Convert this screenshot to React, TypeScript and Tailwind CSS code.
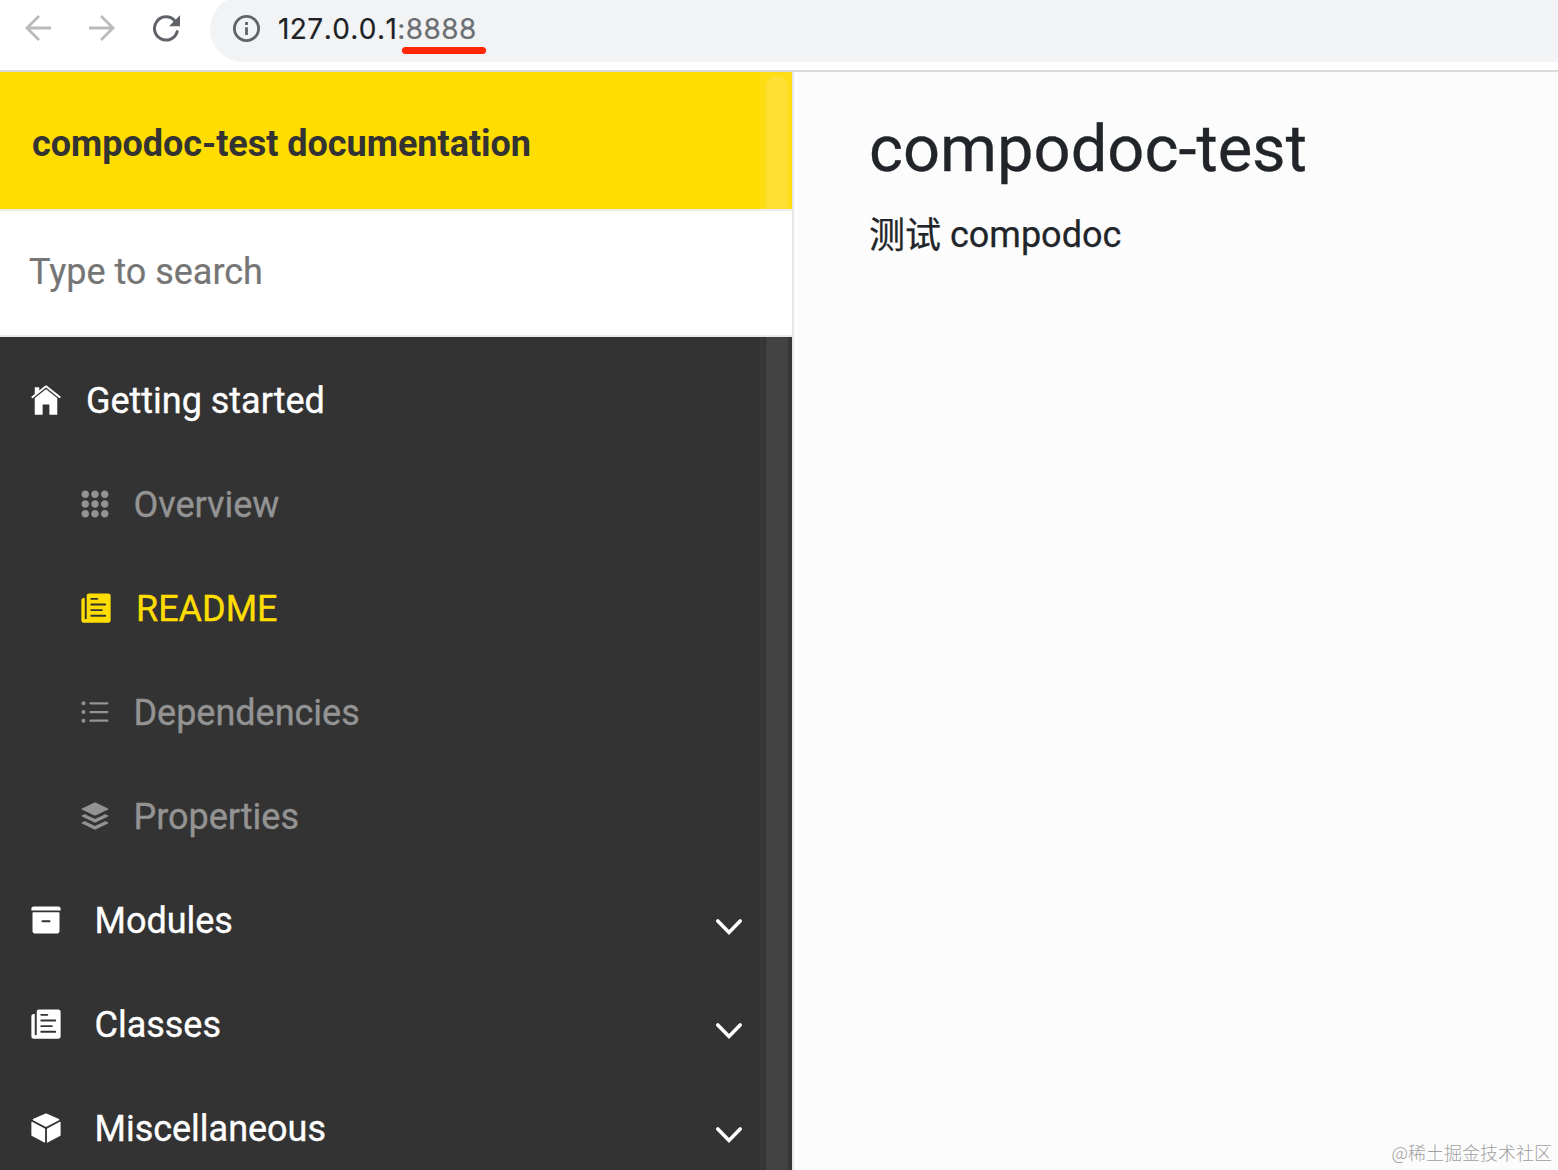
import type { ReactNode } from "react";
import {
  IoIosArchive,
  IoIosCube,
  IoIosHome,
  IoIosKeypad,
  IoIosList,
  IoIosPaper,
  IoLogoBuffer,
} from "react-icons/io";

function BrowserBar() {
  return (
    <header className="flex h-[72px] shrink-0 items-start border-b-2 border-[#dadada] bg-white">
      <div className="flex h-[55px] w-[210px] shrink-0 items-center pl-[24px]">
        <svg width="28" height="28" viewBox="0 0 28 28" fill="none" stroke="#bababa" strokeWidth="2.8">
          <path d="M27 14H3M15 2L3 14l12 12" />
        </svg>
        <svg className="ml-9" width="28" height="28" viewBox="0 0 28 28" fill="none" stroke="#bababa" strokeWidth="2.8">
          <path d="M1 14h24M13 2L25 14 13 26" />
        </svg>
        <svg className="ml-9" width="30" height="30" viewBox="0 0 30 30" fill="none">
          <path d="M25.2 18.6A11.6 11.6 0 1 1 22.5 7.500" stroke="#5f6368" strokeWidth="3" strokeLinecap="round" />
          <path d="M28 2.200v11h-11z" fill="#5f6368" />
        </svg>
      </div>
      <div className="-mt-1 flex h-[66px] flex-1 items-center rounded-l-full bg-[#f1f3f4] pl-[23px]">
        <svg className="-mt-0.5" width="27" height="27" viewBox="0 0 27 27">
          <circle cx="13.5" cy="13.5" r="12.1" fill="none" stroke="#5f6368" strokeWidth="2.8" />
          <path d="M12.100 12.300h2.800v7.800h-2.800zM12.100 7h2.800v2.900h-2.800z" fill="#5f6368" />
        </svg>
        <div className="-mt-px ml-[18px] flex font-['Inter',sans-serif] text-[28px] leading-[34px] tracking-[0.45px] text-[#202124] [font-feature-settings:'calt'_0] [font-kerning:none] [-webkit-text-stroke:0.2px_currentColor]">
          <span>127.0.0.1</span>
          <span className="relative text-[#6b6e72]">
            :8888
            <span className="absolute -right-[9px] bottom-[-8px] h-[7px] w-[84px] rounded-full bg-[#ff2600]" />
          </span>
        </div>
      </div>
    </header>
  );
}

function Chevron() {
  return (
    <svg width="28" height="18" viewBox="0 0 28 18" fill="none" stroke="#fff" strokeWidth="3.6" strokeLinecap="round">
      <path d="M2.800 3L14 14.500 25.200 3" />
    </svg>
  );
}

function ChildRow({ icon, label, active }: { icon: ReactNode; label: string; active?: boolean }) {
  return (
    <li className={active ? "flex h-[104px] items-center pl-[78px] text-[#ffdd00]" : "flex h-[104px] items-center pl-[77px] text-[#939393]"}>
      <span className={active ? "-mt-px w-[58px]" : "-mt-px w-[56.5px]"}>{icon}</span>
      <span className="mt-0.5">{label}</span>
    </li>
  );
}

function SectionRow({ icon, label }: { icon: ReactNode; label: string }) {
  return (
    <li className="flex h-[104px] items-center pr-[17px] pl-[28px] text-white">
      <span className="-mt-px w-[66.5px]">{icon}</span>
      <span className="mt-0.5 flex-1">{label}</span>
      <span className="mt-[14px]">
        <Chevron />
      </span>
    </li>
  );
}

function Sidebar() {
  return (
    <aside className="flex w-[794px] shrink-0 flex-col overflow-hidden border-r-2 border-[#e6e6e6] bg-[#333333] tracking-[-0.02px] [-webkit-text-stroke:0.35px_currentColor]">
      <div className="flex h-[137px] shrink-0 justify-between bg-[#ffdd00] pl-8 font-bold text-[#333333] [-webkit-text-stroke:0]">
        <span className="mt-[45px]">compodoc-test documentation</span>
        <div className="w-8 bg-[#ffdd15] pt-1 pl-[6px]">
          <div className="h-[133px] w-[22px] rounded-t-full bg-[#ffdf33]" />
        </div>
      </div>
      <div className="flex h-32 shrink-0 items-center border-y-2 border-[#ebebeb] bg-white pb-0.5 pl-[29px] text-[#757575] [-webkit-text-stroke:0.2px_currentColor]">
        Type to search
      </div>
      <div className="flex flex-1">
        <ul className="w-[760px] shrink-0 pt-[11px]">
          <li className="flex h-[104px] items-center pl-[28px] text-white">
            <span className="-mt-px w-[58px]">
              <IoIosHome size={36} />
            </span>
            <span className="mt-0.5">Getting started</span>
          </li>
          <ChildRow icon={<IoIosKeypad size={36} />} label="Overview" />
          <ChildRow icon={<IoIosPaper size={36} />} label="README" active />
          <ChildRow icon={<IoIosList size={36} />} label="Dependencies" />
          <ChildRow icon={<IoLogoBuffer size={36} />} label="Properties" />
          <SectionRow icon={<IoIosArchive size={36} />} label="Modules" />
          <SectionRow icon={<IoIosPaper size={36} />} label="Classes" />
          <SectionRow icon={<IoIosCube size={36} />} label="Miscellaneous" />
        </ul>
        <div className="flex w-8 border-l-2 border-[#393939] bg-[#363636] pl-1">
          <div className="w-[22px] bg-[#424242]" />
        </div>
      </div>
    </aside>
  );
}

export default function App() {
  return (
    <div className="flex h-[1170px] w-[1558px] flex-col overflow-hidden bg-[#fcfcfc] font-['Roboto','Noto_Sans_CJK_SC',sans-serif] text-[36px] leading-[54px]">
      <BrowserBar />
      <div className="flex min-h-0 flex-1">
        <Sidebar />
        <main className="relative flex-1 bg-[#fcfcfc] pt-[38px] pl-[75px] text-[#212529] [-webkit-text-stroke:0.25px_currentColor]">
          <h1 className="text-[65px] leading-[79px] [-webkit-text-stroke:0.3px_currentColor]">compodoc-test</h1>
          <p className="mt-[19px]">
            <span className="relative top-px">测试</span> compodoc
          </p>
          <span className="absolute right-[6px] bottom-[5px] font-['Noto_Sans_CJK_SC',sans-serif] text-[18px] leading-[26px] font-light text-[#a0a0a0] [-webkit-text-stroke:0]">
            @稀土掘金技术社区
          </span>
        </main>
      </div>
    </div>
  );
}
